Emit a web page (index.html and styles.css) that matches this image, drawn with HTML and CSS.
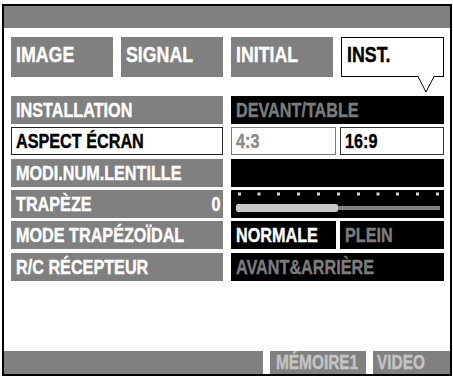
FILE: index.html
```html
<!DOCTYPE html>
<html lang="fr">
<head>
<meta charset="utf-8">
<title>INST.</title>
<link rel="stylesheet" href="styles.css">
</head>
<body>
<div class="frame">
  <div class="topbar"></div>
  <div class="tabs">
    <div class="tab"><span class="t">IMAGE</span></div>
    <div class="tab"><span class="t">SIGNAL</span></div>
    <div class="tab"><span class="t">INITIAL</span></div>
    <div class="tab active"><span class="t">INST.</span>
      <svg class="pointer" width="18" height="17" viewBox="0 0 18 17"><polygon points="1,0 17,0 9,16" fill="#fff"/><polyline points="1,0.5 9,16 17,0.5" fill="none" stroke="#000" stroke-width="1"/></svg>
    </div>
  </div>
  <div class="menu">
    <div class="label"><span class="t">INSTALLATION</span></div>
    <div class="value dim"><span class="t">DEVANT/TABLE</span></div>

    <div class="label sel"><span class="t">ASPECT ÉCRAN</span></div>
    <div class="split">
      <div class="opt off"><span class="t">4:3</span></div>
      <div class="opt on"><span class="t">16:9</span></div>
    </div>

    <div class="label"><span class="t">MODI.NUM.LENTILLE</span></div>
    <div class="value"></div>

    <div class="label between"><span class="t">TRAPÈZE</span><span class="t r">0</span></div>
    <div class="value slider">
      <svg width="213" height="28" viewBox="0 0 213 28">
        <g fill="#d4d4d4">
          <rect x="7" y="2.5" width="3" height="3"/>
          <rect x="26.5" y="2.5" width="3" height="3"/>
          <rect x="46" y="2.5" width="3" height="3"/>
          <rect x="66" y="2.5" width="3" height="3"/>
          <rect x="86" y="2.5" width="3" height="3"/>
          <rect x="106" y="2.5" width="3" height="3"/>
          <rect x="126" y="2.5" width="3" height="3"/>
          <rect x="145.5" y="2.5" width="3" height="3"/>
          <rect x="165" y="2.5" width="3" height="3"/>
          <rect x="185" y="2.5" width="3" height="3"/>
          <rect x="205" y="2.5" width="3" height="3"/>
        </g>
        <rect x="107" y="16" width="102" height="4" fill="#808080"/>
        <rect x="5" y="14" width="102" height="8" rx="2" fill="#c8c8c8"/>
      </svg>
    </div>

    <div class="label"><span class="t">MODE TRAPÉZOÏDAL</span></div>
    <div class="split">
      <div class="opt blk"><span class="t">NORMALE</span></div>
      <div class="opt blk dim"><span class="t">PLEIN</span></div>
    </div>

    <div class="label"><span class="t">R/C RÉCEPTEUR</span></div>
    <div class="value dim"><span class="t">AVANT&amp;ARRIÈRE</span></div>
  </div>
  <div class="footer">
    <div class="seg first"></div>
    <div class="seg mem"><span class="t">MÉMOIRE1</span></div>
    <div class="seg vid"><span class="t">VIDEO</span></div>
  </div>
</div>
</body>
</html>
```
FILE: styles.css
```css
html, body {
  margin: 0;
  padding: 0;
  background: #fff;
}
body {
  font-family: "Liberation Sans", Arial, sans-serif;
  font-weight: bold;
}
.t {
  display: inline-block;
  white-space: nowrap;
  transform: scaleX(0.79);
  transform-origin: left center;
  -webkit-text-stroke: 0.4px currentColor;
}
.t.r {
  transform-origin: right center;
}
.frame {
  margin: 4px 0 0 2px;
  width: 446px;
  height: 368px;
  border: 2px solid #000;
  display: flex;
  flex-direction: column;
  background: #fff;
}
.topbar {
  height: 22px;
  background: #808080;
}
.tabs {
  margin-top: 9px;
  padding: 0 7px;
  display: grid;
  grid-template-columns: repeat(4, 102px);
  column-gap: 8px;
}
.tab {
  position: relative;
  box-sizing: border-box;
  height: 40px;
  background: #808080;
  color: #fff;
  font-size: 22.5px;
  line-height: 1;
  padding: 0 0 4px 5px;
  display: flex;
  align-items: center;
}
.tab.active {
  background: #fff;
  color: #000;
  border: 1px solid #000;
  width: 103px;
  height: 40px;
  padding-left: 5px;
}
.pointer {
  position: absolute;
  left: 75px;
  top: 38px;
}
.menu {
  margin-top: 19px;
  padding: 0 7px;
  display: grid;
  grid-template-columns: 212px 213px;
  grid-auto-rows: 28px;
  column-gap: 8px;
  row-gap: 3.33px;
}
.label {
  box-sizing: border-box;
  background: #808080;
  color: #fff;
  font-size: 20.5px;
  line-height: 28px;
  padding-left: 5px;
  white-space: nowrap;
  overflow: hidden;
}
.label.sel {
  background: #fff;
  color: #000;
  border: 1px solid #222;
  line-height: 26px;
  padding-left: 4px;
}
.label.between {
  display: flex;
  justify-content: space-between;
  padding-right: 3px;
}
.value {
  box-sizing: border-box;
  background: #000;
  font-size: 20.5px;
  line-height: 28px;
  padding-left: 5px;
  white-space: nowrap;
  overflow: hidden;
}
.dim {
  color: #7c7c7c;
}
.slider {
  padding: 0;
}
.slider svg {
  display: block;
}
.split {
  display: grid;
  grid-template-columns: 105px 104px;
  column-gap: 4px;
}
.opt {
  box-sizing: border-box;
  font-size: 20.5px;
  line-height: 26px;
  padding-left: 4px;
  border: 1px solid #333;
  background: #fff;
  overflow: hidden;
  white-space: nowrap;
}
.opt.off {
  color: #8a8a8a;
  border-color: #777;
}
.opt.on {
  color: #000;
}
.opt.blk {
  background: #000;
  color: #fff;
  border: none;
  line-height: 28px;
  padding-left: 5px;
}
.opt.blk.dim {
  color: #7c7c7c;
}
.footer {
  margin-top: auto;
  height: 23px;
  display: flex;
  column-gap: 7px;
  background: #fff;
}
.seg {
  flex: none;
  background: #808080;
  color: #c4c4c4;
  font-size: 19.5px;
  line-height: 23px;
  overflow: hidden;
  white-space: nowrap;
}
.seg.first {
  width: 259px;
}
.seg.mem {
  width: 90px;
  padding-left: 6px;
}
.seg.vid {
  flex: 1;
  padding-left: 4px;
}
```
